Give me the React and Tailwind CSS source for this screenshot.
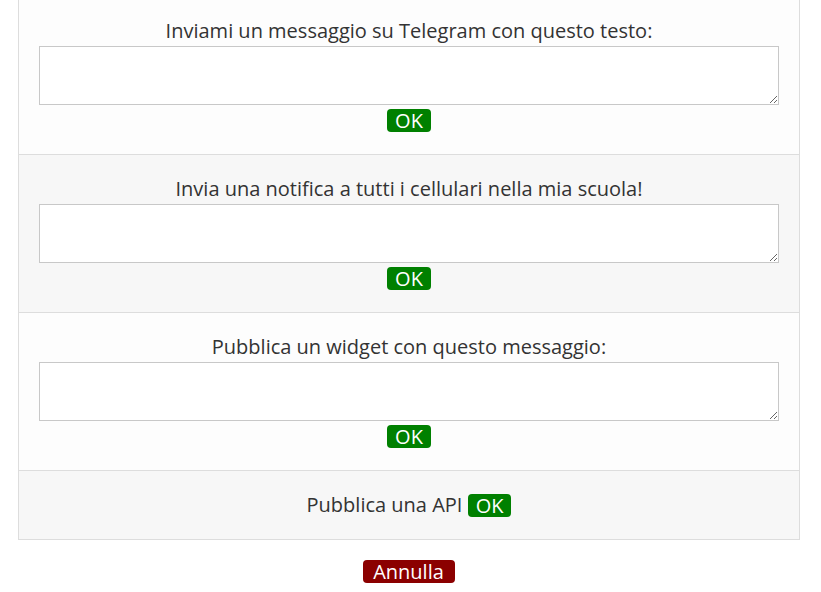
import React from 'react';

const OkButton = () => (
  <button className="block rounded-[4px] bg-[#008000] px-2 text-[20px] leading-[23px] text-white">
    OK
  </button>
);

const rows = [
  { label: 'Inviami un messaggio su Telegram con questo testo:', first: true },
  { label: 'Invia una notifica a tutti i cellulari nella mia scuola!' },
  { label: 'Pubblica un widget con questo messaggio:' },
];

const App = () => {
  return (
    <div className="min-h-screen bg-white font-['Open_Sans',sans-serif] text-[#333]">
      <div className="ml-[18px] w-[782px] border-x border-b border-[#ddd]">
        {rows.map((row, i) => (
          <div
            key={i}
            className={`flex flex-col items-center border-b border-[#ddd] px-5 pb-[22px] ${
              row.first ? 'pt-4' : 'pt-[19px]'
            } ${i % 2 === 1 ? 'bg-[#f7f7f7]' : 'bg-[#fdfdfd]'}`}
          >
            <p className="text-[20px] leading-[30px]">{row.label}</p>
            <textarea className="block h-[59px] w-full border border-[#c8c8c8] bg-white" />
            <div className="mt-[4px] flex">
              <OkButton />
            </div>
          </div>
        ))}
        <div className="flex items-center justify-center bg-[#f7f7f7] px-5 py-5 text-[20px] leading-[28px]">
          <span>Pubblica una API&nbsp;</span>
          <OkButton />
        </div>
      </div>
      <div className="ml-[18px] mt-[20px] flex w-[782px] justify-center">
        <button className="block rounded-[4px] bg-[#8b0000] pl-[10px] pr-[11px] text-[20px] leading-[23px] text-white">
          Annulla
        </button>
      </div>
    </div>
  );
};

export default App;
